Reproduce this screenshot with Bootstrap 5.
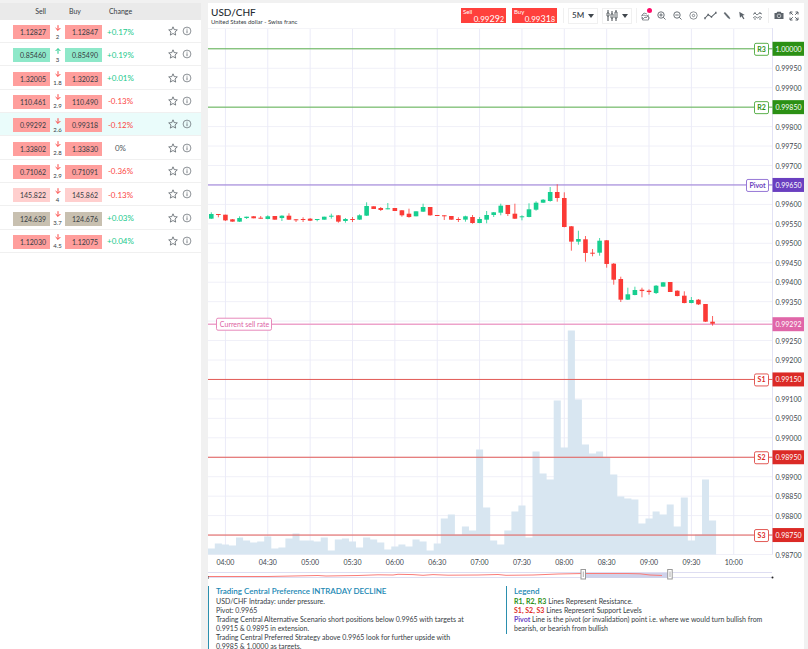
<!DOCTYPE html>
<html lang="en">
<head>
<meta charset="utf-8">
<meta name="viewport" content="width=device-width, initial-scale=1">
<title>USD/CHF</title>
<link rel="stylesheet" href="https://cdn.jsdelivr.net/npm/bootstrap@5.3.0/dist/css/bootstrap.min.css">
<style>
html, body { height: 100%; }
body { background: #f1f1f1; font-family: Lato, "Open Sans", sans-serif; font-size: 8px; line-height: 9px; color: #363c43; overflow: hidden; }
button { font-family: inherit; }
.workspace { height: 100%; padding: 3px 4px 0 0; gap: 7px; }
.watchlist { flex: 0 0 25%; min-width: 201px; max-width: 201px; }
.rates { height: 250px; margin: 0; font-size: 8px; line-height: 9px; table-layout: fixed; width: 100%; border-collapse: collapse; color: #50565c; }
.rates th { background: #eaeaea; height: 17px; padding: 0; font-weight: 400; font-size: 7px; text-align: center; color: #363c43; }
.rates td { padding: 2px 0 0; text-align: center; border-bottom: 1px solid #f0f0f0; vertical-align: middle; }
.rates .picked td { background: #eafcfb; }
.c-edge { width: 13px; } .c-rate { width: 37px; } .c-mid { width: 15px; } .c-chg { width: 37px; }
.rate { display: block; width: 100%; height: 14px; padding: 1px 4px 0 0; border: 0; border-radius: 0; font-size: 7px; line-height: 13px; text-align: right; color: #363c43; }
.down { background: #ff9e9c; } .up { background: #8ee8c9; } .faint { background: #ffcfce; } .flat { background: #c8c0b0; }
.spread { font-size: 6px; line-height: 7px; color: #363c43; }
.spread svg { display: block; margin: 0 auto 2px; }
.row-actions { gap: 4px; padding: 0 9px 2px 0; }
.rates .pos, .pos { color: #21c98c; } .rates .neg, .neg { color: #fb4744; }
.mini { border: 0; background: none; padding: 0; line-height: 0; color: #5c636a; }
.tools { height: 25px; padding: 0 5px 0 3px; }
.pair { font-size: 10px; line-height: 11px; color: #262c32; margin: 0; font-weight: 500; }
.pair-name { font-size: 6px; line-height: 7px; }
.deal { width: 45px; height: 15px; background: #ff403c; color: #fff; border: 0; padding: 0 2px; margin-right: 6px; font-size: 6px; line-height: 6px; text-align: left; border-radius: 0; }
.deal b { display: block; text-align: right; font-weight: 400; font-size: 8px; line-height: 8px; }
.deal big { font-size: 9px; line-height: 8px; }
.deal sub { font-size: 7px; line-height: 8px; bottom: 0; }
.picker { border: 1px solid #f0f0f0; height: 16px; color: #40464d; background: #fff; padding: 0 3px; margin-right: 4px; }
.picker select { appearance: none; border: 0; background: none; padding: 0; font-size: 8px; font-weight: 600; line-height: 11px; width: 16px; color: inherit; font-family: inherit; }
.rule { width: 1px; height: 15px; background: #f0f0f0; }
.icons { gap: 5px; padding-left: 3px; }
.alert-dot { position: absolute; right: -1px; top: -2px; width: 5px; height: 5px; border-radius: 50%; background: #ff0a68; }
.chart { display: block; width: 100%; height: auto; font-size: 7px; }
.notes { padding: 4px 0 0; }
.note { border-left: 1px solid #2b8fae; padding: 0 0 0 7px; min-height: 48px; }
.note h2 { font-size: 8px; line-height: 10px; font-weight: 600; color: #2288b4; margin: 0 0 1px; }
.note p { margin: 0; font-size: 7px; line-height: 9px; }
.col-main { flex: 0 0 50%; } .col-key { flex: 0 0 46%; }
.resist { color: #2b9014; } .support { color: #e02c28; } .pivot { color: #6a3fc4; }
</style>
</head>
<body>
<svg class="d-none">
  <symbol id="star" viewBox="0 0 10 10"><path d="M5 .8 6.2 3.6 9.3 3.9 7 6l.7 3.1L5 7.5 2.3 9.100 3 6 .7 3.900l3.100-.3Z" fill="none" stroke="currentColor" stroke-width=".8"/></symbol>
  <symbol id="info" viewBox="0 0 10 10"><circle cx="5" cy="5" r="3.900" fill="none" stroke="currentColor" stroke-width=".7"/><path d="M5 4.300V7.200M5 2.700v.9" stroke="currentColor" stroke-width=".8"/></symbol>
  <symbol id="arrow" viewBox="0 0 6 6"><path d="M3 .2V5.300M.6 3 3 5.400 5.400 3" fill="none" stroke="currentColor"/></symbol>
  <symbol id="arrow-up" viewBox="0 0 6 6"><path d="M3 5.800V.7M.6 3 3 .6 5.400 3" fill="none" stroke="currentColor"/></symbol>
</svg>
<div class="workspace d-flex">
  <aside class="watchlist bg-white">
    <table class="rates">
      <colgroup><col class="c-edge"><col class="c-rate"><col class="c-mid"><col class="c-rate"><col class="c-chg"><col></colgroup>
      <thead><tr><th></th><th class="text-end pe-1">Sell</th><th></th><th class="text-start ps-1">Buy</th><th>Change</th><th></th></tr></thead>
      <tbody id="rates"></tbody>
    </table>
  </aside>
  <main class="flex-grow-1 bg-white">
    <header class="tools d-flex align-items-center">
      <div class="me-auto"><h1 class="pair">USD/CHF</h1><div class="pair-name">United States dollar - Swiss franc</div></div>
      <button class="deal">Sell<b>0.99<big>29</big><sub>2</sub></b></button>
      <button class="deal">Buy<b>0.99<big>31</big><sub>8</sub></b></button>
      <span class="rule me-1"></span>
      <div class="picker d-flex align-items-center"><select aria-label="Interval"><option>5M</option></select><svg width="6" height="4"><path d="M0 0h6L3 4Z" fill="currentColor"/></svg></div>
      <button class="picker d-flex align-items-center gap-1" aria-label="Chart type">
        <svg width="12" height="11" viewBox="0 0 12 11" fill="none" stroke="currentColor"><path d="M2 0v3M2 6v5M6 1v3M6 8v3M10 0v2M10 8v3"/><path d="M1 3h2v3H1ZM5 4h2v4H5ZM9 2h2v6H9Z" stroke-width=".8"/></svg>
        <svg width="6" height="4"><path d="M0 0h6L3 4Z" fill="currentColor"/></svg>
      </button>
      <span class="rule"></span>
      <div class="icons d-flex align-items-center">
        <button class="mini position-relative" aria-label="Analysis"><svg width="11" height="11" viewBox="0 0 11 11" fill="none" stroke="currentColor" stroke-width=".7"><path d="M2 5 4 3 7 4M1 6l3-1 2 1 3-1M2.500 7v3h6V6M3 9l2-2 1 1 2-2M1 8h1M9 8h1"/></svg><span class="alert-dot"></span></button>
        <button class="mini" aria-label="Zoom in"><svg width="11" height="11" viewBox="0 0 11 11" fill="none" stroke="currentColor" stroke-width=".9"><circle cx="5" cy="5" r="3.200"/><path d="M7.300 7.300 9.500 9.500M5 3.300v3.400M3.300 5h3.400"/></svg></button>
        <button class="mini" aria-label="Zoom out"><svg width="11" height="11" viewBox="0 0 11 11" fill="none" stroke="currentColor" stroke-width=".9"><circle cx="5" cy="5" r="3.200"/><path d="M7.300 7.300 9.500 9.500M3.300 5h3.400"/></svg></button>
        <button class="mini" aria-label="Reset zoom"><svg width="11" height="11" viewBox="0 0 11 11" fill="none" stroke="currentColor" stroke-width=".7"><circle cx="5.500" cy="5.500" r="3.700"/><circle cx="5.500" cy="5.500" r="1.200"/></svg></button>
        <button class="mini" aria-label="Indicators"><svg width="13" height="11" viewBox="0 0 14 11" fill="none" stroke="currentColor" stroke-width="1.100"><path d="M1 8.500 4.500 4.500 8 7 13 2.500"/><path d="M.3 8.500h1.500M3.800 4.500h1.500M7.300 7h1.500M12 2.500h1.500" stroke-width="2"/></svg></button>
        <button class="mini" aria-label="Draw"><svg width="10" height="11" viewBox="0 0 11 11"><path d="M3.300 2 8 7.200 8.800 9.200 6.800 8.300 2.200 3Z" fill="currentColor" stroke="currentColor" stroke-width=".5"/></svg></button>
        <button class="mini" aria-label="Pointer"><svg width="10" height="11" viewBox="0 0 11 11"><path d="M2.500 1.500 8.500 5 6.200 5.600 8.200 9 7 9.700 5 6.300 3.300 8Z" fill="currentColor"/></svg></button>
        <button class="mini" aria-label="Patterns"><svg width="11" height="11" viewBox="0 0 11 11" fill="none" stroke="currentColor" stroke-width=".8"><path d="M1 4.500 3 3 5 5 7.500 3 10 4M1 8 3 6.500 5.500 8 8 6.500 10 8M3 2v2M8 2v2M3 8v2M8 8v2"/></svg></button>
        <span class="rule"></span>
        <button class="mini" aria-label="Snapshot"><svg width="10" height="9" viewBox="0 0 10 9"><path d="M.5 2h2L3.300.8h3.400L7.500 2h2v6H.5Z" fill="currentColor"/><circle cx="5" cy="4.900" r="1.800" fill="none" stroke="#fff" stroke-width=".6"/></svg></button>
        <button class="mini" aria-label="Full screen"><svg width="10" height="10" viewBox="0 0 10 10" fill="none" stroke="currentColor"><path d="M1 3.500V1h2.500M6.500 1H9v2.500M9 6.500V9H6.500M3.500 9H1V6.500M1 1l2.800 2.800M9 1 6.200 3.800M9 9 6.200 6.200M1 9l2.800-2.800"/></svg></button>
      </div>
    </header>
    <svg id="chart" class="chart" viewBox="0 0 596 554" role="img" aria-label="USD/CHF price chart"></svg>
    <section class="notes d-flex">
      <div class="col-main">
        <div class="note">
          <h2>Trading Central Preference INTRADAY DECLINE</h2>
          <p>USD/CHF Intraday: under pressure.<br>Pivot: 0.9965<br>Trading Central Alternative Scenario short positions below 0.9965 with targets at<br>0.9915 &amp; 0.9895 in extension.<br>Trading Central Preferred Strategy above 0.9965 look for further upside with<br>0.9985 &amp; 1.0000 as targets.</p>
        </div>
      </div>
      <div class="col-key">
        <div class="note">
          <h2>Legend</h2>
          <p><b class="resist">R1, R2, R3</b> Lines Represent Resistance.<br><b class="support">S1, S2, S3</b> Lines Represent Support Levels<br><b class="pivot">Pivot</b> Line is the pivot (or invalidation) point i.e. where we would turn bullish from<br>bearish, or bearish from bullish</p>
        </div>
      </div>
    </section>
  </main>
</div>
<script>
const quotes = [
  ['1.12827','2','1.12847','+0.17%','down'], ['0.85460','3','0.85490','+0.19%','up'],
  ['1.32005','1.8','1.32023','+0.01%','down'], ['110.461','2.9','110.490','-0.13%','down'],
  ['0.99292','2.6','0.99318','-0.12%','down'], ['1.33802','2.8','1.33830','0%','down'],
  ['0.71062','2.9','0.71091','-0.36%','down'], ['145.822','4','145.862','-0.13%','faint'],
  ['124.639','3.7','124.676','+0.03%','flat'], ['1.12030','4.5','1.12075','+0.04%','down']];
document.getElementById('rates').innerHTML = quotes.map((q, i) => {
  const up = q[4] === 'up', tone = q[3][0] === '+' ? 'pos' : q[3][0] === '-' ? 'neg' : '';
  return `<tr class="${i === 4 ? 'picked' : ''}"><td></td><td><button class="rate ${q[4]}">${q[0]}</button></td>
  <td class="spread"><svg class="${up ? 'pos' : 'neg'}" width="6" height="6"><use href="#arrow${up ? '-up' : ''}"/></svg>${q[1]}</td>
  <td><button class="rate ${q[4]}">${q[2]}</button></td><td class="${tone}">${q[3]}</td>
  <td><div class="row-actions d-flex justify-content-end"><button class="mini" aria-label="Favourite"><svg width="10" height="10"><use href="#star"/></svg></button><button class="mini" aria-label="Details"><svg width="10" height="10"><use href="#info"/></svg></button></div></td></tr>`;
}).join('');

// Chart geometry: first candle centre, candle pitch, price row height
const X0 = 3.3, STEP = 7.06, TOP = 20.8, ROW = 19.45, RIGHT = 564.5, BASE = 526.5;
const py = p => TOP + (1 - p) / 0.0005 * ROW;
const GREEN = '#17cf90', RED = '#fb3a36', INK = '#40464d';
let out = '';
for (let i = 0; i <= 26; i++) out += `<path d="M0 ${TOP + i * ROW}H${RIGHT}" stroke="#f0f0f8"/>`;
for (let i = 0; i <= 12; i++) {
  const x = X0 + STEP * (2 + 6 * i), m = 240 + i * 30;
  out += `<path d="M${x} 0V${BASE}" stroke="#ebebf8"/><text x="${x}" y="536.500" text-anchor="middle" fill="${INK}">${String(m / 60 | 0).padStart(2, '0')}:${m % 60 ? '30' : '00'}</text>`;
}
out += `<path d="M0 .5H${RIGHT}" stroke="#f4f4f8"/><path d="M${RIGHT} 0V${BASE}" stroke="#e2e2f4"/>`;

const volume = [6,11,10,9,17,14,12,13,18,6,7,16,21,14,14,13,17,4,15,16,13,7,17,15,12,5,8,10,8,15,13,4,11,36,40,20,28,24,105,47,14,10,24,43,49,17,103,81,75,154,107,224,155,110,101,103,97,80,58,56,55,31,36,43,40,50,28,57,14,20,75,34];
out += '<path fill="#d8e6f1" d="M0 ' + BASE + volume.map((v, i) => `V${BASE - v}H${(X0 + STEP * (i + .5)).toFixed(1)}`).join('') + `V${BASE}Z"/>`;

const level = (p, name, tag, line) => {
  const y = py(p), w = name === 'Pivot' ? 22 : 14;
  return `<path d="M0 ${y}H${RIGHT}" stroke="${line}"/>
  <rect x="${560.5 - w}" y="${y - 5.5}" width="${w}" height="12" rx="1.500" fill="#fff" stroke="${line}"/>
  <text x="${560.5 - w / 2}" y="${y + 3}" text-anchor="middle" font-weight="700" fill="${tag}">${name}</text>`;
};
const marks = [[1,'R3','#2b9014','#5bb04c'],[.9985,'R2','#2b9014','#5bb04c'],[.9965,'Pivot','#6a3fc0','#9678d6'],[.9915,'S1','#db2a26','#e25a56'],[.9895,'S2','#db2a26','#e25a56'],[.9875,'S3','#db2a26','#e25a56']];
marks.forEach(m => out += level(...m));
const sell = py(.99292);
out += `<path d="M0 ${sell}H${RIGHT}" stroke="#eda3cb" stroke-width="1.500"/><rect x="8.500" y="${sell - 6}" width="55" height="12" rx="1.500" fill="#fff" stroke="#e78abb"/><text x="36.500" y="${sell + 2.5}" text-anchor="middle" fill="#dd5fa3">Current sell rate</text>`;

for (let i = 1; i <= 26; i++) {
  const p = 1 - i * .0005;
  if (marks.some(m => Math.abs(m[0] - p) < 1e-6) || i === 14) continue;
  out += `<text x="567.500" y="${TOP + i * ROW + 3}" fill="${INK}">${p.toFixed(5)}</text>`;
}
[...marks, [.99292, '', '#e066a8']].forEach(m => out += `<rect x="564.500" y="${py(m[0]) - 7}" width="31.500" height="14" fill="${m[2]}"/><text x="567.500" y="${py(m[0]) + 3}" fill="#fff">${m[0].toFixed(5)}</text>`);

// Candles: colour, body top, body bottom, high, low (thirds of a unit below y = 152)
const candles = `g 102 116 97 117|r 102 104 102 112|r 104 121 104 123|r 118 125 117 125|g 114 125 109 126|g 110 114 110 117|r 109 115 108 115|r 113 115 108 116|g 109 117 106 118|r 108 119 108 119|g 107 114 106 123|r 107 119 100 120|r 118 120 117 126|r 117 119 112 126|r 116 122 114 123|g 117 120 117 124|g 110 119 110 119|g 107 110 101 116|r 106 125 105 128|g 117 123 114 128|r 117 119 111 126|g 106 119 103 120|g 78 107 67 108|r 79 87 79 87|r 84 90 81 93|g 85 87 69 88|r 84 93 84 93|r 91 106 90 110|r 101 111 86 113|g 94 109 94 109|g 81 95 71 96|r 81 106 81 107|r 105 107 105 108|r 106 108 106 120|r 108 119 108 119|r 117 119 112 126|g 109 119 107 125|r 111 129 105 131|g 117 129 111 130|g 105 119 93 130|g 97 105 96 111|g 77 98 71 106|r 75 102 75 108|r 101 116 71 117|g 109 112 106 121|g 88 111 70 112|g 68 89 64 92|g 59 68 57 69|g 36 63 21 65|r 36 54 13 65|r 54 141 37 142|r 139 185 138 212|g 177 185 152 194|r 178 219 168 245|r 218 220 207 229|g 182 218 174 227|r 181 252 180 263|r 251 299 249 314|r 297 359 290 366|g 343 359 323 360|g 330 345 320 346|r 329 333 323 352|r 332 336 328 344|g 317 339 315 342|g 307 320 306 320|r 306 336 306 336|r 332 348 331 349|r 347 369 334 370|g 360 369 351 370|r 359 373 357 375|r 372 425 372 426|r 425 431 408 437`;
candles.split('|').forEach((s, i) => {
  const [c, a, b, h, l] = s.split(' '), y = v => (152 + v / 3).toFixed(1), x = X0 + STEP * i, k = c === 'g' ? GREEN : RED;
  out += `<path d="M${x} ${y(h)}V${y(l)}" stroke="${k}" stroke-width=".8"/><rect x="${x - 2.3}" y="${y(a)}" width="4.600" height="${Math.max(1, (b - a) / 3)}" fill="${k}"/>`;
});

// Range navigator
out += `<path d="M0 544.500H564M0 549.500H564" stroke="#dedef2"/><rect x="375" y="545" width="87" height="5" fill="#cfd2ea"/>
<path d="M0 548.500H60L85 548 110 547.500 118 548 150 547.500 170 546.800 185 547 190 546.300 205 546.600 215 547.300 225 546.600 240 547.200 270 547 290 546.500 298 547.300 325 547 350 546 375 545.500 420 545.500 432 545.800 442 547 454 547.500" fill="none" stroke="#fa7c78"/>
<g fill="#fff" stroke="#999"><rect x="373" y="541.500" width="4.500" height="9.500"/><rect x="459.700" y="541.500" width="4.500" height="9.500"/></g><path d="M375.300 543.500v5.500M462 543.500v5.500" stroke="#999" stroke-width=".8"/>
<path d="M0 548v3" stroke="#444"/><circle cx="564.500" cy="549.500" r="1" fill="#222"/>`;
document.getElementById('chart').innerHTML = out;
</script>
<script src="https://cdn.jsdelivr.net/npm/bootstrap@5.3.0/dist/js/bootstrap.bundle.min.js"></script>
</body>
</html>
